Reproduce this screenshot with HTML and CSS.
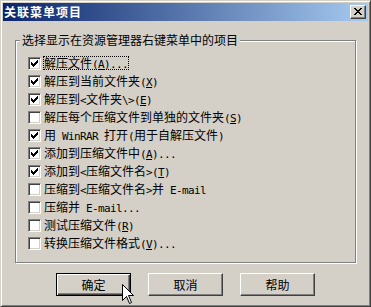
FILE: index.html
```html
<!DOCTYPE html>
<html lang="zh-CN">
<head>
  <meta charset="UTF-8" />
  <title>关联菜单项目</title>
  <meta name="viewport" content="width=device-width, initial-scale=1.0"/>
  <link rel="stylesheet" href="styles.css">
</head>
<body>

<div class="window">
  <div class="titlebar">
    <span class="title">关联菜单项目</span>
    <button class="close" aria-label="关闭">
      <svg width="8" height="7" viewBox="0 0 8 7"><path d="M0 0h2v1H0zM6 0h2v1H6zM1 1h2v1H1zM5 1h2v1H5zM2 2h4v1H2zM3 3h2v1H3zM2 4h4v1H2zM1 5h2v1H1zM5 5h2v1H5zM0 6h2v1H0zM6 6h2v1H6z"/></svg>
    </button>
  </div>

  <fieldset class="group">
    <legend>选择显示在资源管理器右键菜单中的项目</legend>
    <ul class="items">
      <li class="item">
        <span class="box"><svg class="tick" viewBox="0 0 11 11"><path d="M2 4h1v3H2zM3 5h1v3H3zM4 6h1v3H4zM5 5h1v3H5zM6 4h1v3H6zM7 3h1v3H7zM8 2h1v3H8z"/></svg></span>
        <span class="label focus">解压文件<span class="en">(<u>A</u>)...</span></span>
      </li>
      <li class="item">
        <span class="box"><svg class="tick" viewBox="0 0 11 11"><path d="M2 4h1v3H2zM3 5h1v3H3zM4 6h1v3H4zM5 5h1v3H5zM6 4h1v3H6zM7 3h1v3H7zM8 2h1v3H8z"/></svg></span>
        <span class="label">解压到当前文件夹<span class="en">(<u>X</u>)</span></span>
      </li>
      <li class="item">
        <span class="box"><svg class="tick" viewBox="0 0 11 11"><path d="M2 4h1v3H2zM3 5h1v3H3zM4 6h1v3H4zM5 5h1v3H5zM6 4h1v3H6zM7 3h1v3H7zM8 2h1v3H8z"/></svg></span>
        <span class="label">解压到<span class="en">&lt;</span>文件夹<span class="en">\&gt;(<u>E</u>)</span></span>
      </li>
      <li class="item">
        <span class="box"></span>
        <span class="label">解压每个压缩文件到单独的文件夹<span class="en">(<u>S</u>)</span></span>
      </li>
      <li class="item">
        <span class="box"><svg class="tick" viewBox="0 0 11 11"><path d="M2 4h1v3H2zM3 5h1v3H3zM4 6h1v3H4zM5 5h1v3H5zM6 4h1v3H6zM7 3h1v3H7zM8 2h1v3H8z"/></svg></span>
        <span class="label">用<span class="en"> WinRAR </span>打开<span class="en">(</span>用于自解压文件<span class="en">)</span></span>
      </li>
      <li class="item">
        <span class="box"><svg class="tick" viewBox="0 0 11 11"><path d="M2 4h1v3H2zM3 5h1v3H3zM4 6h1v3H4zM5 5h1v3H5zM6 4h1v3H6zM7 3h1v3H7zM8 2h1v3H8z"/></svg></span>
        <span class="label">添加到压缩文件中<span class="en">(<u>A</u>)...</span></span>
      </li>
      <li class="item">
        <span class="box"><svg class="tick" viewBox="0 0 11 11"><path d="M2 4h1v3H2zM3 5h1v3H3zM4 6h1v3H4zM5 5h1v3H5zM6 4h1v3H6zM7 3h1v3H7zM8 2h1v3H8z"/></svg></span>
        <span class="label">添加到<span class="en">&lt;</span>压缩文件名<span class="en">&gt;(<u>T</u>)</span></span>
      </li>
      <li class="item">
        <span class="box"></span>
        <span class="label">压缩到<span class="en">&lt;</span>压缩文件名<span class="en">&gt;</span>并<span class="en"> E-mail</span></span>
      </li>
      <li class="item">
        <span class="box"></span>
        <span class="label">压缩并<span class="en"> E-mail...</span></span>
      </li>
      <li class="item">
        <span class="box"></span>
        <span class="label">测试压缩文件<span class="en">(<u>R</u>)</span></span>
      </li>
      <li class="item">
        <span class="box"></span>
        <span class="label">转换压缩文件格式<span class="en">(<u>V</u>)...</span></span>
      </li>
    </ul>
  </fieldset>

  <div class="buttons">
    <button class="btn default">确定</button>
    <button class="btn">取消</button>
    <button class="btn">帮助</button>
  </div>

  <!-- mouse pointer over the OK button -->
  <svg class="cursor" width="13" height="21" viewBox="0 0 13 21">
    <path d="M0.5 0.5V16.5L4.5 12.5L7.5 19.5L9.5 18.5L6.5 11.5H11.5Z" fill="#fff" stroke="#000"/>
  </svg>
</div>

</body>
</html>
```

FILE: styles.css
```css
* {
  box-sizing: border-box;
}

body {
  margin: 0;
  background: #d4d0c8;
}

.window {
  position: relative;
  width: 371px;
  height: 307px;
  padding: 2px;
  background: #d4d0c8;
  border: 1px solid;
  border-color: #d4d0c8 #404040 #404040 #d4d0c8;
  box-shadow: inset 1px 1px #fff, inset -1px -1px #808080;
  font: 12px "Noto Sans CJK SC", sans-serif;
  color: #000;
}

.titlebar {
  display: flex;
  align-items: center;
  justify-content: space-between;
  height: 18px;
  padding: 0 2px 0 1px;
  background: linear-gradient(to right, #0a246a, #a6caf0);
}

.title {
  color: #fff;
  font-weight: bold;
  letter-spacing: 1px;
  line-height: 14px;
}

.close {
  display: flex;
  align-items: center;
  justify-content: center;
  width: 16px;
  height: 14px;
  padding: 0 0 1px 0;
  background: #d4d0c8;
  border: 1px solid;
  border-color: #fff #404040 #404040 #fff;
  box-shadow: inset -1px -1px #808080;
}

.close svg {
  display: block;
}

/* etched group box */
.group {
  margin: 12px 12px 0;
  padding: 0 0 9px;
  border: 1px solid #808080;
  box-shadow: inset 1px 1px #fff, 1px 1px #fff;
  min-width: 0;
}

.group legend {
  margin-left: 4px;
  padding: 0 2px;
  line-height: 14px;
  background: #d4d0c8;
}

.items {
  list-style: none;
  margin: 0;
  padding: 8px 0 0 12px;
}

.item {
  display: flex;
  align-items: flex-start;
  height: 18px;
}

.box {
  flex: none;
  width: 13px;
  height: 13px;
  margin-top: 2px;
  background: #fff;
  border: 1px solid;
  border-color: #808080 #fff #fff #808080;
  box-shadow: inset 1px 1px #404040, inset -1px -1px #d4d0c8;
}

.tick {
  display: block;
  width: 11px;
  height: 11px;
}

.label {
  display: inline-block;
  height: 14px;
  margin: 1px 0 0 2px;
  border: 1px dotted transparent;
  line-height: 12px;
  white-space: nowrap;
}

.label.focus {
  border-color: #000;
}

.en {
  font-family: "DejaVu Sans Mono", monospace;
  font-size: 11px;
  letter-spacing: -0.62px;
  white-space: pre;
}

.buttons {
  display: flex;
  justify-content: center;
  gap: 17px;
  margin-top: 10px;
}

.btn {
  width: 75px;
  height: 23px;
  padding: 0;
  font: inherit;
  color: #000;
  background: #d4d0c8;
  border: 1px solid;
  border-color: #fff #404040 #404040 #fff;
  box-shadow: inset -1px -1px #808080;
}

.btn.default {
  border-color: #000;
  box-shadow: inset 1px 1px #fff, inset -1px -1px #404040, inset -2px -2px #808080;
}

.cursor {
  position: absolute;
  left: 121px;
  top: 283px;
}
```
